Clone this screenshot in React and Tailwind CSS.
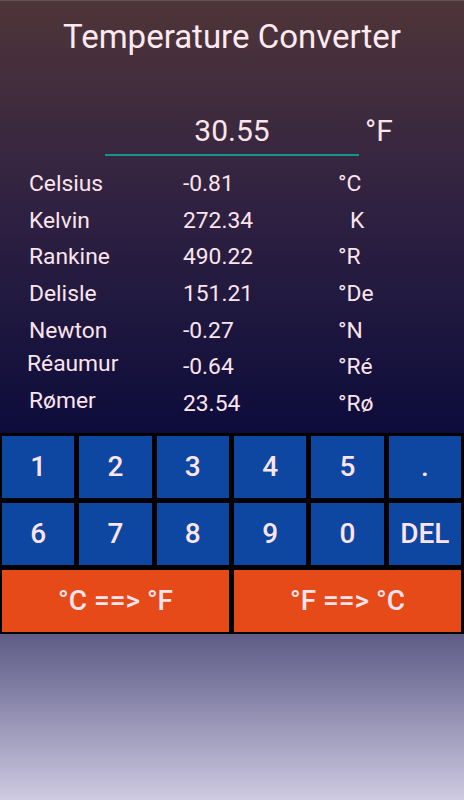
const results = [
  { name: 'Celsius', value: '-0.81', unit: '°C' },
  { name: 'Kelvin', value: '272.34', unit: 'K', unitPad: true },
  { name: 'Rankine', value: '490.22', unit: '°R' },
  { name: 'Delisle', value: '151.21', unit: '°De' },
  { name: 'Newton', value: '-0.27', unit: '°N' },
  { name: 'Réaumur', value: '-0.64', unit: '°Ré', lift: true },
  { name: 'Rømer', value: '23.54', unit: '°Rø', lift: true },
]

const keys = ['1', '2', '3', '4', '5', '.', '6', '7', '8', '9', '0', 'DEL']

export default function App() {
  return (
    <div className="w-[464px] h-[800px] flex flex-col font-['Roboto',sans-serif] text-[#fce4ec]">
      {/* upper part: title, input and the conversions */}
      <div className="h-[433px] border-t border-[#5e5656] bg-gradient-to-b from-[#4f3538] via-[#2e2041] to-[#0d0b3b]">
        <h1 className="pt-[16px] text-center text-[33px] leading-[40px] text-[#fde9ef]">
          Temperature Converter
        </h1>

        <div className="mt-[53px] flex items-end">
          <div className="ml-[105px] w-[254px] border-b-2 border-[#13958a] text-center text-[30px] leading-[42px] pb-[2px]">
            30.55
          </div>
          <div className="ml-[6px] pb-[4px] text-[30px] leading-[42px]">°F</div>
        </div>

        <div className="mt-[10px] flex flex-col">
          {results.map((r) => (
            <div key={r.name} className="h-[36.6px] flex items-center text-[22.8px] leading-[28px]">
              <span
                className={
                  r.lift
                    ? 'w-[183px] shrink-0 mb-[6px] ' + (r.name === 'Réaumur' ? 'pl-[27px]' : 'pl-[29px]')
                    : 'w-[183px] shrink-0 pl-[29px]'
                }
              >
                {r.name}
              </span>
              <span className="w-[155px] shrink-0">{r.value}</span>
              <span className={r.unitPad ? 'pl-[12px]' : ''}>{r.unit}</span>
            </div>
          ))}
        </div>
      </div>

      {/* keypad */}
      <div className="bg-black pt-[3px] pb-[2px] pl-[2px] pr-[3px] flex flex-col gap-[5px]">
        <div className="grid grid-cols-6 gap-[5px]">
          {keys.map((k) => (
            <button
              key={k}
              className="h-[62px] bg-[#0d47a1] text-[28px] font-medium text-[#fce4ec] flex items-center justify-center"
            >
              {k}
            </button>
          ))}
        </div>
        <div className="grid grid-cols-2 gap-[5px]">
          <button className="h-[62px] bg-[#e64a19] text-[28px] font-medium text-[#fce4ec]">
            °C ==&gt; °F
          </button>
          <button className="h-[62px] bg-[#e64a19] text-[28px] font-medium text-[#fce4ec]">
            °F ==&gt; °C
          </button>
        </div>
      </div>

      <div className="flex-1 bg-gradient-to-b from-[#5e5b86] to-[#cfcbe2]" />
    </div>
  )
}
